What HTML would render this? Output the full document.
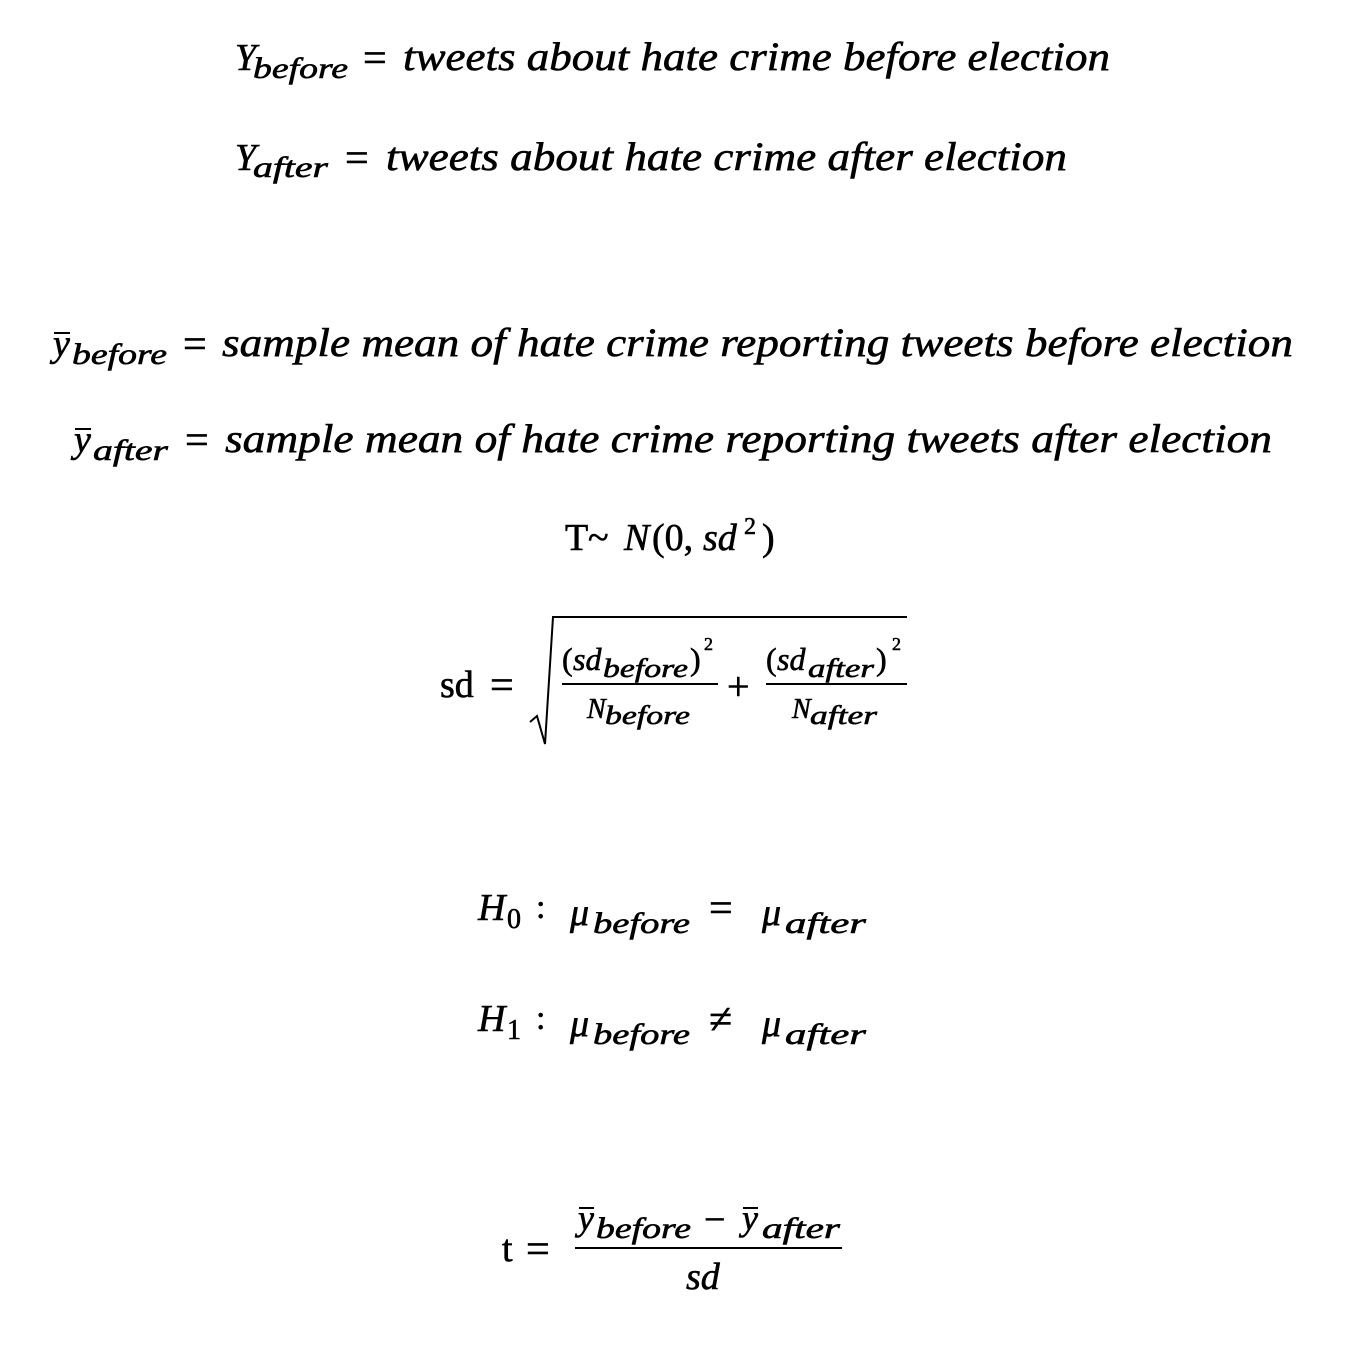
<!DOCTYPE html>
<html><head><meta charset="utf-8"><style>
html,body{margin:0;padding:0;background:#fff;}
svg{display:block}
text{font-family:"Liberation Serif",serif;fill:#000;stroke:#000;stroke-width:0.6;}
.i{font-style:italic}
</style></head><body>
<svg width="1356" height="1346" viewBox="0 0 1356 1346" xmlns="http://www.w3.org/2000/svg">
<!-- Line 1 -->
<text class="i" x="235" y="70" font-size="38">Y</text>
<text class="i" x="253" y="78" font-size="30" textLength="95" lengthAdjust="spacingAndGlyphs">before</text>
<text x="363" y="72" font-size="42">=</text>
<text class="i" x="403" y="70" font-size="40" textLength="707" lengthAdjust="spacingAndGlyphs">tweets about hate crime before election</text>
<!-- Line 2 -->
<text class="i" x="235" y="170" font-size="38">Y</text>
<text class="i" x="253" y="177" font-size="30" textLength="75" lengthAdjust="spacingAndGlyphs">after</text>
<text x="345" y="172" font-size="42">=</text>
<text class="i" x="386" y="170" font-size="40" textLength="681" lengthAdjust="spacingAndGlyphs">tweets about hate crime after election</text>
<!-- Line 3 -->
<text class="i" x="53" y="356" font-size="38">y</text>
<line x1="54" y1="333" x2="70" y2="333" stroke="#000" stroke-width="2"/>
<text class="i" x="72" y="364" font-size="30" textLength="95" lengthAdjust="spacingAndGlyphs">before</text>
<text x="183" y="358" font-size="42">=</text>
<text class="i" x="222" y="356" font-size="40" textLength="1071" lengthAdjust="spacingAndGlyphs">sample mean of hate crime reporting tweets before election</text>
<!-- Line 4 -->
<text class="i" x="74" y="452" font-size="38">y</text>
<line x1="75" y1="429" x2="91" y2="429" stroke="#000" stroke-width="2"/>
<text class="i" x="93" y="460" font-size="30" textLength="75" lengthAdjust="spacingAndGlyphs">after</text>
<text x="185" y="454" font-size="42">=</text>
<text class="i" x="225" y="452" font-size="40" textLength="1047" lengthAdjust="spacingAndGlyphs">sample mean of hate crime reporting tweets after election</text>
<!-- Line 5 -->
<text x="565" y="550" font-size="38">T</text>
<text x="588" y="550" font-size="38">~</text>
<text class="i" x="624" y="550" font-size="38">N</text>
<text x="652" y="550" font-size="38">(0,</text>
<text class="i" x="703" y="550" font-size="38">sd</text>
<text x="744" y="534" font-size="24">2</text>
<text x="762" y="550" font-size="38">)</text>
<!-- sd formula -->
<text x="440" y="697" font-size="38">sd</text>
<text x="490" y="699" font-size="42">=</text>
<polyline points="530,722 537,716 545,744 553,617 907,617" fill="none" stroke="#000" stroke-width="2"/>
<text x="562" y="670" font-size="32">(</text>
<text class="i" x="573" y="670" font-size="32">sd</text>
<text class="i" x="603" y="677" font-size="26" textLength="85" lengthAdjust="spacingAndGlyphs">before</text>
<text x="690" y="670" font-size="32">)</text>
<text x="704" y="650" font-size="18">2</text>
<line x1="562" y1="684" x2="718" y2="684" stroke="#000" stroke-width="2"/>
<text class="i" x="587" y="718" font-size="28">N</text>
<text class="i" x="605" y="724" font-size="26" textLength="85" lengthAdjust="spacingAndGlyphs">before</text>
<text x="727" y="700" font-size="40">+</text>
<text x="766" y="670" font-size="32">(</text>
<text class="i" x="777" y="670" font-size="32">sd</text>
<text class="i" x="808" y="677" font-size="26" textLength="66" lengthAdjust="spacingAndGlyphs">after</text>
<text x="876" y="670" font-size="32">)</text>
<text x="892" y="650" font-size="18">2</text>
<line x1="766" y1="684" x2="907" y2="684" stroke="#000" stroke-width="2"/>
<text class="i" x="792" y="718" font-size="28">N</text>
<text class="i" x="810" y="724" font-size="26" textLength="67" lengthAdjust="spacingAndGlyphs">after</text>
<!-- H0 -->
<text class="i" x="478" y="920" font-size="38">H</text>
<text x="507" y="928" font-size="28">0</text>
<text x="536" y="918" font-size="34">:</text>
<text class="i" x="570" y="925" font-size="38">μ</text>
<text class="i" x="593" y="933" font-size="30" textLength="97" lengthAdjust="spacingAndGlyphs">before</text>
<text x="709" y="922" font-size="42">=</text>
<text class="i" x="762" y="925" font-size="38">μ</text>
<text class="i" x="785" y="933" font-size="30" textLength="81" lengthAdjust="spacingAndGlyphs">after</text>
<!-- H1 -->
<text class="i" x="478" y="1031" font-size="38">H</text>
<text x="507" y="1039" font-size="28">1</text>
<text x="536" y="1029" font-size="34">:</text>
<text class="i" x="570" y="1036" font-size="38">μ</text>
<text class="i" x="593" y="1044" font-size="30" textLength="97" lengthAdjust="spacingAndGlyphs">before</text>
<text x="709" y="1033" font-size="42">≠</text>
<text class="i" x="762" y="1036" font-size="38">μ</text>
<text class="i" x="785" y="1044" font-size="30" textLength="81" lengthAdjust="spacingAndGlyphs">after</text>
<!-- t formula -->
<text x="502" y="1261" font-size="38">t</text>
<text x="526" y="1263" font-size="42">=</text>
<text class="i" x="578" y="1230" font-size="36">y</text>
<line x1="579" y1="1208" x2="594" y2="1208" stroke="#000" stroke-width="2"/>
<text class="i" x="596" y="1238" font-size="30" textLength="95" lengthAdjust="spacingAndGlyphs">before</text>
<text x="704" y="1232" font-size="38">−</text>
<text class="i" x="742" y="1230" font-size="36">y</text>
<line x1="743" y1="1208" x2="758" y2="1208" stroke="#000" stroke-width="2"/>
<text class="i" x="762" y="1238" font-size="30" textLength="78" lengthAdjust="spacingAndGlyphs">after</text>
<line x1="575" y1="1248" x2="842" y2="1248" stroke="#000" stroke-width="2"/>
<text class="i" x="686" y="1289" font-size="38">sd</text>
</svg>
</body></html>
